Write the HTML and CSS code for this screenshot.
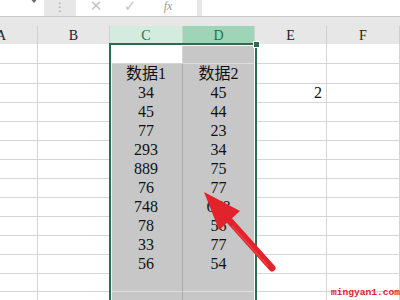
FILE: index.html
```html
<!DOCTYPE html>
<html lang="zh-CN">
  <head>
    <meta charset="UTF-8" />
    <title>数据</title>
    <link rel="stylesheet" href="styles.css">
  </head>
  <body>
    <div class="window">
      <div class="toolbar">
        <div class="namebox"><span class="caret"></span></div>
        <div class="grip">⋮</div>
        <div class="func">
          <span class="icon">✕</span>
          <span class="icon">✓</span>
          <span class="icon fx">fx</span>
        </div>
        <div class="formula"></div>
      </div>

      <div class="sheet">
        <div class="row head">
          <div class="cell">A</div><div class="cell">B</div>
          <div class="cell sel-c">C</div><div class="cell sel-d">D</div>
          <div class="cell">E</div><div class="cell">F</div>
        </div>
        <div class="row first">
          <div class="cell"></div><div class="cell"></div>
          <div class="cell active"></div><div class="cell gray"></div>
          <div class="cell"></div><div class="cell"></div>
        </div>
        <div class="row">
          <div class="cell"></div><div class="cell"></div>
          <div class="cell gray">数据1</div><div class="cell gray">数据2</div>
          <div class="cell"></div><div class="cell"></div>
        </div>
        <div class="row">
          <div class="cell"></div><div class="cell"></div>
          <div class="cell gray">34</div><div class="cell gray">45</div>
          <div class="cell num">2</div><div class="cell"></div>
        </div>
        <div class="row">
          <div class="cell"></div><div class="cell"></div>
          <div class="cell gray">45</div><div class="cell gray">44</div>
          <div class="cell"></div><div class="cell"></div>
        </div>
        <div class="row">
          <div class="cell"></div><div class="cell"></div>
          <div class="cell gray">77</div><div class="cell gray">23</div>
          <div class="cell"></div><div class="cell"></div>
        </div>
        <div class="row">
          <div class="cell"></div><div class="cell"></div>
          <div class="cell gray">293</div><div class="cell gray">34</div>
          <div class="cell"></div><div class="cell"></div>
        </div>
        <div class="row">
          <div class="cell"></div><div class="cell"></div>
          <div class="cell gray">889</div><div class="cell gray">75</div>
          <div class="cell"></div><div class="cell"></div>
        </div>
        <div class="row">
          <div class="cell"></div><div class="cell"></div>
          <div class="cell gray">76</div><div class="cell gray">77</div>
          <div class="cell"></div><div class="cell"></div>
        </div>
        <div class="row">
          <div class="cell"></div><div class="cell"></div>
          <div class="cell gray">748</div><div class="cell gray">678</div>
          <div class="cell"></div><div class="cell"></div>
        </div>
        <div class="row">
          <div class="cell"></div><div class="cell"></div>
          <div class="cell gray">78</div><div class="cell gray">56</div>
          <div class="cell"></div><div class="cell"></div>
        </div>
        <div class="row">
          <div class="cell"></div><div class="cell"></div>
          <div class="cell gray">33</div><div class="cell gray">77</div>
          <div class="cell"></div><div class="cell"></div>
        </div>
        <div class="row">
          <div class="cell"></div><div class="cell"></div>
          <div class="cell gray">56</div><div class="cell gray">54</div>
          <div class="cell"></div><div class="cell"></div>
        </div>
        <div class="row">
          <div class="cell"></div><div class="cell"></div>
          <div class="cell gray"></div><div class="cell gray"></div>
          <div class="cell"></div><div class="cell"></div>
        </div>
        <div class="row">
          <div class="cell"></div><div class="cell"></div>
          <div class="cell gray"></div><div class="cell gray"></div>
          <div class="cell"></div><div class="cell"></div>
        </div>

        <!-- selection frame over columns C:D -->
        <div class="selection"><span class="handle"></span></div>
      </div>

      <svg class="arrow" width="400" height="300" viewBox="0 0 400 300">
        <line x1="272" y1="268" x2="229" y2="220" stroke="#e2232b" stroke-width="7" stroke-linecap="round" />
        <polygon points="204,192 240,211 219,230" fill="#e2232b" />
        <line x1="268" y1="266" x2="232" y2="226" stroke="#f0555a" stroke-width="1.5" opacity="0.6" />
      </svg>

      <div class="watermark">mingyan1.com</div>
    </div>
  </body>
</html>
```

FILE: styles.css
```css
body {
  margin: 0;
  background-color: #fff;
  font-family: "Liberation Serif", "Noto Sans CJK SC", serif;
  overflow: hidden;
}

.window {
  position: relative;
  width: 400px;
  height: 300px;
  overflow: hidden;
  background-color: #e7e7e7;
}

/* formula bar, cut off at the top */
.toolbar {
  display: flex;
  height: 16px;
  border-bottom: 1px solid #c9c9c9;
  margin-bottom: 9px;
  overflow: hidden;
}

.namebox {
  width: 44px;
  background-color: #fff;
  position: relative;
}

.caret {
  position: absolute;
  left: 29px;
  top: -3px;
  border-left: 5px solid transparent;
  border-right: 5px solid transparent;
  border-top: 6px solid #6a6a6a;
}

.grip {
  width: 32px;
  text-align: center;
  color: #a5a5a5;
  font-size: 12px;
  line-height: 14px;
  font-family: "DejaVu Sans", sans-serif;
}

.func {
  width: 109px;
  background-color: #fff;
  display: flex;
  align-items: flex-start;
  padding-left: 12px;
  gap: 18px;
}

.icon {
  color: #c4c4c4;
  font-family: "DejaVu Sans", sans-serif;
  font-size: 15px;
  line-height: 12px;
  width: 16px;
  text-align: center;
  margin-top: 0;
}

.fx {
  font-family: "Liberation Serif", serif;
  font-style: italic;
  font-size: 12px;
  color: #9a9a9a;
  margin-left: 4px;
}

.formula {
  flex: 1;
  margin-left: 5px;
  background-color: #fff;
}

/* grid */
.sheet {
  position: relative;
  background-color: #fff;
}

.row {
  display: grid;
  grid-template-columns: 38px 72px 73px 72px 72px 73px;
  height: 19px;
}

.row.first {
  height: 20px;
}

.cell {
  box-sizing: border-box;
  border-right: 1px solid #d5d5d5;
  border-bottom: 1px solid #d5d5d5;
  text-align: center;
  font-size: 16px;
  line-height: 19px;
  color: #111;
}

.row.head {
  height: 18px;
  background-color: #e7e7e7;
}

.head .cell {
  border-bottom: none;
  border-right-color: #d0d0d0;
  font-size: 14px;
  line-height: 20px;
  color: #222;
}

.head .cell:first-child {
  text-align: left;
  text-indent: -4px;
}

.head .sel-c {
  background-color: #d3ecdf;
  color: #217346;
}

.head .sel-d {
  background-color: #9ed5b8;
  color: #217346;
}

.gray {
  background-color: #c7c7c7;
  border-bottom-color: #dedede;
  border-right-color: #a9a9a9;
}

.active {
  background-color: #fff;
}

.num {
  text-align: right;
  padding-right: 4px;
}

.selection {
  position: absolute;
  left: 109px;
  top: 17px;
  width: 144px;
  height: 300px;
  border: 2px solid #2f6b51;
  box-shadow: inset 0 0 0 1px #fff;
}

.handle {
  position: absolute;
  right: -5px;
  top: -4px;
  width: 5px;
  height: 5px;
  background-color: #2f6b51;
  border: 1px solid #fff;
}

.arrow {
  position: absolute;
  left: 0;
  top: 0;
}

.watermark {
  position: absolute;
  right: 0;
  bottom: 2px;
  font-family: "Liberation Mono", monospace;
  font-size: 9.6px;
  font-weight: bold;
  color: #e0262a;
}
```
